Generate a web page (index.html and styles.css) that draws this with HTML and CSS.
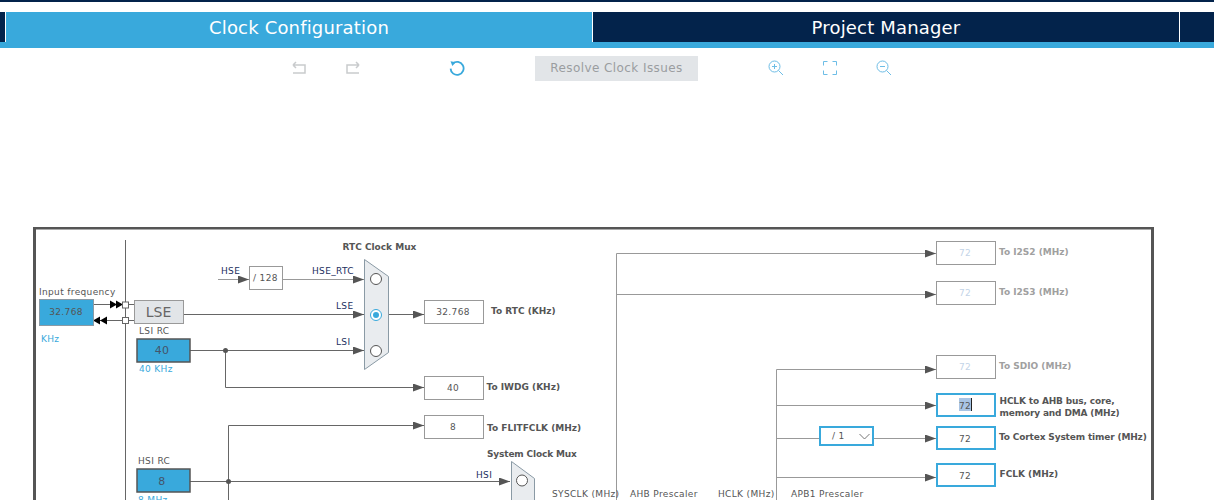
FILE: index.html
```html
<!DOCTYPE html>
<html lang="en">
<head>
  <meta charset="UTF-8">
  <title>Clock Configuration</title>
  <link rel="stylesheet" href="styles.css">
</head>
<body>

  <div class="tabs">
    <div class="tab-stub"></div>
    <div class="tab tab-active">Clock Configuration</div>
    <div class="tab">Project Manager</div>
    <div class="tab-stub tab-end"></div>
  </div>

  <div class="toolbar">
    <svg class="icon icon-off" viewBox="0 0 16 16"><path d="M2 5h12v8H2M2 5l3-3M2 5l3 3"/></svg>
    <svg class="icon icon-off icon-redo" viewBox="0 0 16 16"><path d="M14 5H2v8h12M14 5l-3-3M14 5l-3 3"/></svg>
    <svg class="icon icon-on icon-reload" viewBox="0 0 16 16"><path class="thick" d="M3.7 3.6A6.500 6.500 0 1 1 1.600 8.600"/><path class="solid" d="M1.500 1.300l5.400.9-3.600 3.800z"/></svg>
    <button class="resolve">Resolve Clock Issues</button>
    <svg class="icon icon-on icon-zoomin" viewBox="0 0 16 16"><circle cx="6.500" cy="6.500" r="5.500"/><path d="M10.500 10.500l4.500 4.500M4 6.500h5M6.500 4v5"/></svg>
    <svg class="icon icon-on icon-fit" viewBox="0 0 16 16"><path d="M1.500 5.500V1.500H5.500M10.500 1.500h4V5.500M14.500 10.500v4H10.500M5.500 14.500H1.500V10.500"/></svg>
    <svg class="icon icon-on icon-zoomout" viewBox="0 0 16 16"><circle cx="6.500" cy="6.500" r="5.500"/><path d="M10.500 10.500l4.500 4.500M4 6.500h5"/></svg>
  </div>

  <svg class="diagram" viewBox="0 227 1214 273" width="1214" height="273">
    <defs>
      <marker id="arrow" markerUnits="userSpaceOnUse" markerWidth="12" markerHeight="8" refX="11" refY="4" orient="auto">
        <path d="M0 0L11 4L0 8z" fill="#555"/>
      </marker>
    </defs>

    <rect class="frame" x="34.500" y="228" width="1118" height="290"/>

    <!-- wires -->
    <g class="wires">
      <path d="M125.500 240V500"/>
      <path d="M94 304.500H122M94 320.500H122M129 304.500H134M129 320.500H134"/>
      <path d="M184 314.500H364" marker-end="url(#arrow)"/>
      <path d="M190 350.500H364" marker-end="url(#arrow)"/>
      <path d="M225.500 350.500V387.500H424" marker-end="url(#arrow)"/>
      <path d="M389 314.500H424" marker-end="url(#arrow)"/>
      <path d="M228.500 500V425.500H424" marker-end="url(#arrow)"/>
      <path d="M190 481.500H510" marker-end="url(#arrow)"/>
    </g>
    <g class="wires wires-off">
      <path d="M218 279.500H249" marker-end="url(#arrow)"/>
      <path d="M283 279.500H364" marker-end="url(#arrow)"/>
      <path d="M616.500 500V253.500H936" marker-end="url(#arrow)"/>
      <path d="M616.500 294.500H936" marker-end="url(#arrow)"/>
      <path d="M776.500 500V369.500H936" marker-end="url(#arrow)"/>
      <path d="M776.500 405.500H936" marker-end="url(#arrow)"/>
      <path d="M776.500 438.500H819M873 438.500H936" marker-end="url(#arrow)"/>
      <path d="M776.500 477.500H936" marker-end="url(#arrow)"/>
    </g>
    <circle class="dot" cx="225.500" cy="350.500" r="2.500"/>
    <circle class="dot" cx="228.500" cy="481.500" r="2.500"/>

    <!-- LSE pins -->
    <path class="pin-arrow" d="M110 300.500l7 4-7 4zM116 300.500l7 4-7 4zM107 316.500l-7 4 7 4zM100 316.500l-7 4 7 4z"/>
    <rect class="pin" x="122.500" y="302" width="6" height="6"/>
    <rect class="pin" x="122.500" y="317.500" width="6" height="6"/>

    <!-- sources -->
    <text class="small" x="39" y="295">Input frequency</text>
    <rect class="source source-open" x="39.500" y="299.500" width="54" height="26"/>
    <text class="value value-dark" x="66" y="315">32.768</text>
    <text class="small blue" x="41" y="342">KHz</text>

    <rect class="lse" x="134.500" y="300.500" width="49" height="23"/>
    <text class="lse-text" x="158.500" y="317">LSE</text>

    <text class="small" x="139" y="334">LSI RC</text>
    <rect class="source" x="137" y="339" width="53" height="23"/>
    <text class="source-text" x="162" y="354">40</text>
    <text class="small blue" x="139" y="372">40 KHz</text>

    <text class="small" x="138" y="464">HSI RC</text>
    <rect class="source" x="137" y="469" width="53" height="23"/>
    <text class="source-text" x="162" y="485">8</text>
    <text class="small blue" x="138" y="503">8 MHz</text>

    <!-- RTC mux -->
    <text class="small navy" x="221" y="274">HSE</text>
    <rect class="box" x="249.500" y="266.500" width="33" height="23"/>
    <text class="value value-left" x="253" y="281">/ 128</text>
    <text class="small navy" x="312" y="274">HSE_RTC</text>
    <text class="small navy" x="336" y="309">LSE</text>
    <text class="small navy" x="336" y="345">LSI</text>
    <text class="bold" x="342.500" y="250">RTC Clock Mux</text>
    <path class="mux" d="M364.500 259.500L388.500 276.500V352.500L364.500 369.500z"/>
    <circle class="radio" cx="376" cy="279" r="5.500"/>
    <circle class="radio radio-on" cx="376" cy="315" r="5.500"/>
    <circle class="radio-dot" cx="376" cy="315" r="3"/>
    <circle class="radio" cx="376" cy="351" r="5.500"/>

    <!-- RTC / IWDG / FLITF outputs -->
    <rect class="box" x="424.500" y="300.500" width="59" height="23"/>
    <text class="value value-dark" x="453" y="315">32.768</text>
    <text class="bold" x="491" y="314">To RTC (KHz)</text>
    <rect class="box" x="424.500" y="376.500" width="59" height="23"/>
    <text class="value value-dark" x="453" y="391">40</text>
    <text class="bold" x="486.500" y="390">To IWDG (KHz)</text>
    <rect class="box" x="424.500" y="415.500" width="59" height="23"/>
    <text class="value value-dark" x="453" y="430">8</text>
    <text class="bold" x="487" y="431">To FLITFCLK (MHz)</text>

    <!-- system mux -->
    <text class="bold bold-tight" x="487" y="457">System Clock Mux</text>
    <text class="small navy" x="476" y="478">HSI</text>
    <path class="mux" d="M511.500 461.500L534.500 478.500V520H511.500z"/>
    <circle class="radio" cx="522" cy="480.500" r="5.500"/>

    <text class="small" x="552" y="497">SYSCLK (MHz)</text>
    <text class="small" x="630" y="497">AHB Prescaler</text>
    <text class="small" x="718" y="497">HCLK (MHz)</text>
    <text class="small" x="791" y="497">APB1 Prescaler</text>

    <!-- right outputs -->
    <rect class="box" x="936.500" y="241.500" width="59" height="23"/>
    <text class="value value-off" x="965" y="256">72</text>
    <text class="bold bold-off" x="999" y="255">To I2S2 (MHz)</text>
    <rect class="box" x="936.500" y="281.500" width="59" height="23"/>
    <text class="value value-off" x="965" y="296">72</text>
    <text class="bold bold-off" x="999" y="295">To I2S3 (MHz)</text>
    <rect class="box" x="936.500" y="355.500" width="59" height="23"/>
    <text class="value value-off" x="965" y="370">72</text>
    <text class="bold bold-off" x="999" y="369">To SDIO (MHz)</text>

    <rect class="box-on" x="937" y="394" width="58" height="22"/>
    <rect class="selection" x="959" y="398" width="12" height="13"/>
    <path class="caret" d="M971.500 398V411"/>
    <text class="value value-dark" x="965" y="409">72</text>
    <text class="bold bold-tight" x="999.500" y="404">HCLK to AHB bus, core,</text>
    <text class="bold bold-tight" x="999.500" y="416">memory and DMA (MHz)</text>

    <rect class="box-on select" x="820" y="427" width="53" height="18"/>
    <text class="value value-left" x="832" y="439">/ 1</text>
    <path class="chevron" d="M859.500 434l5 5 5-5"/>

    <rect class="box-on" x="937" y="427" width="58" height="22"/>
    <text class="value value-dark" x="965" y="442">72</text>
    <text class="bold bold-tight" x="999" y="440">To Cortex System timer (MHz)</text>

    <rect class="box-on" x="937" y="464" width="58" height="22"/>
    <text class="value value-dark" x="965" y="479">72</text>
    <text class="bold" x="999.500" y="477">FCLK (MHz)</text>
  </svg>

</body>
</html>
```

FILE: styles.css
```css
html, body {
  margin: 0;
  height: 500px;
  overflow: hidden;
  background-color: #fff;
  font-family: "DejaVu Sans", sans-serif;
}
body {
  border-top: 2px solid #03234b;
  box-sizing: border-box;
}

/* tabs */
.tabs {
  display: flex;
  margin-top: 10px;
  height: 36px;
  background-color: #39a9dc;
}
.tab-stub {
  width: 5px;
  height: 30px;
  background-color: #03234b;
}
.tab-end {
  width: 34px;
}
.tab {
  width: 586px;
  height: 30px;
  line-height: 31px;
  border-left: 1px solid #fff;
  background-color: #03234b;
  color: #fff;
  font-size: 18px;
  letter-spacing: 0.17px;
  text-align: center;
}
.tab:nth-child(3) {
  border-right: 1px solid #fff;
}
.tab-active {
  height: 30px;
  background-color: #39a9dc;
}

/* toolbar */
.toolbar {
  display: flex;
  align-items: center;
  height: 40px;
  padding: 0 0 0 291px;
}
.icon {
  width: 16px;
  height: 16px;
  fill: none;
  stroke-width: 1;
}
.icon-off {
  stroke: #c9cbcd;
  stroke-width: 1.5;
}
.icon-on {
  stroke: #6dbde6;
}
.icon-redo {
  margin-left: 38px;
}
.icon-reload {
  margin-left: 88px;
}
.icon-reload .thick {
  stroke: #39a9dc;
  stroke-width: 1.8;
}
.icon-reload .solid {
  fill: #39a9dc;
  stroke: none;
}
.resolve {
  width: 163px;
  height: 25px;
  margin-left: 70px;
  padding: 0;
  border: none;
  background-color: #e2e5e8;
  color: #9a9da0;
  font-family: "DejaVu Sans", sans-serif;
  font-size: 12px;
  letter-spacing: 0.42px;
}
.icon-zoomin {
  margin-left: 70px;
}
.icon-fit {
  margin-left: 38px;
}
.icon-zoomout {
  margin-left: 38px;
}

/* diagram */
.diagram {
  display: block;
  margin-top: 139px;
  font-family: "DejaVu Sans", sans-serif;
}
.frame {
  fill: #fff;
  stroke: #555;
  stroke-width: 3;
}
.wires path {
  fill: none;
  stroke: #666;
}
.wires-off path {
  stroke: #999;
}
.dot {
  fill: #555;
}
.pin-arrow {
  fill: #000;
}
.pin {
  fill: #fff;
  stroke: #666;
}
.small {
  font-size: 9px;
  letter-spacing: 0.35px;
  fill: #555;
}
.blue {
  fill: #39a9dc;
}
.navy {
  fill: #1b2f5e;
}
.bold {
  font-size: 9px;
  font-weight: bold;
  fill: #555;
}
.bold-tight {
  letter-spacing: -0.15px;
}
.bold-off {
  fill: #a0a0a0;
}
.source {
  fill: #39a9dc;
  stroke: #555;
  stroke-width: 1.5;
}
.source-open {
  stroke: #8a9aa5;
  stroke-width: 1;
}
.source-text {
  font-size: 11px;
  letter-spacing: 0.3px;
  fill: #44546a;
  text-anchor: middle;
}
.lse {
  fill: #e2e5e8;
  stroke: #999;
}
.lse-text {
  font-size: 14px;
  fill: #666;
  text-anchor: middle;
}
.box {
  fill: #fff;
  stroke: #999;
}
.box-on {
  fill: #fff;
  stroke: #39a9dc;
  stroke-width: 2;
}
.value {
  font-size: 9px;
  letter-spacing: 0.35px;
  text-anchor: middle;
}
.value-dark {
  fill: #555;
}
.value-off {
  fill: #c3d4e8;
}
.value-left {
  fill: #555;
  text-anchor: start;
}
.mux {
  fill: #e9ecef;
  stroke: #8a9aa5;
}
.radio {
  fill: #fff;
  stroke: #555;
}
.radio-on {
  stroke: #39a9dc;
}
.radio-dot {
  fill: #39a9dc;
}
.selection {
  fill: #a9c4e4;
}
.caret {
  stroke: #222;
  fill: none;
}
.chevron {
  fill: none;
  stroke: #777;
}
```
